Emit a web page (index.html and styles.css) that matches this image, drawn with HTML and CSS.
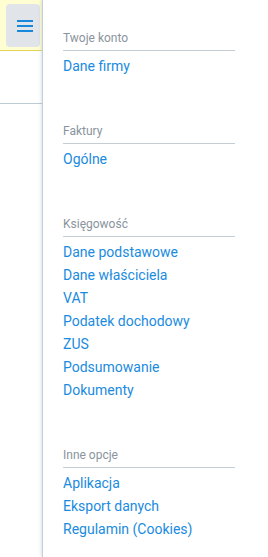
FILE: index.html
```html
<!DOCTYPE html>
<html>
<head>
  <title>Menu</title>
  <link rel="stylesheet" href="styles.css">
</head>
<body>
  <div class="page">
    <div class="side">
      <div class="topbar">
        <button class="menu-btn">
          <svg width="16" height="12" viewBox="0 0 16 12">
            <rect x="0" y="0" width="16" height="2" fill="#1789dc"/>
            <rect x="0" y="5" width="16" height="2" fill="#1789dc"/>
            <rect x="0" y="10" width="16" height="2" fill="#1789dc"/>
          </svg>
        </button>
      </div>
      <div class="side-row"></div>
    </div>

    <nav class="panel">
      <div class="section">
        <div class="section-title">Twoje konto</div>
        <ul class="links">
          <li><a href="#">Dane firmy</a></li>
        </ul>
      </div>

      <div class="section">
        <div class="section-title">Faktury</div>
        <ul class="links">
          <li><a href="#">Ogólne</a></li>
        </ul>
      </div>

      <div class="section">
        <div class="section-title">Księgowość</div>
        <ul class="links">
          <li><a href="#">Dane podstawowe</a></li>
          <li><a href="#">Dane właściciela</a></li>
          <li><a href="#">VAT</a></li>
          <li><a href="#">Podatek dochodowy</a></li>
          <li><a href="#">ZUS</a></li>
          <li><a href="#">Podsumowanie</a></li>
          <li><a href="#">Dokumenty</a></li>
        </ul>
      </div>

      <div class="section">
        <div class="section-title">Inne opcje</div>
        <ul class="links">
          <li><a href="#">Aplikacja</a></li>
          <li><a href="#">Eksport danych</a></li>
          <li><a href="#">Regulamin (Cookies)</a></li>
        </ul>
      </div>
    </nav>
  </div>
</body>
</html>
```

FILE: styles.css
```css
body {
  margin: 0;
  font-family: Roboto, "Liberation Sans", sans-serif;
  background: #fff;
}

.page {
  display: flex;
  height: 557px;
  overflow: hidden;
}

.side {
  width: 42px;
  flex-shrink: 0;
  overflow: hidden;
}

.topbar {
  height: 51px;
  background: #fffed3;
  border-bottom: 1px solid #e6d552;
  padding: 4px 0 0 6px;
  box-sizing: border-box;
}

.menu-btn {
  width: 34px;
  height: 43px;
  border: none;
  border-radius: 4px;
  background: #e1e4e9;
  padding: 0 0 0 4px;
  display: flex;
  align-items: center;
  justify-content: center;
}

.menu-btn svg {
  display: block;
}

.side-row {
  height: 52px;
  border-bottom: 1px solid #bccad4;
}

.panel {
  flex: 1;
  border-left: 1px solid #c3cfd8;
  box-shadow: -1px 0 3px rgba(120, 140, 160, 0.25);
  padding: 30px 33px 0 20px;
}

.section {
  margin-bottom: 45px;
}

.section-title {
  font-size: 12px;
  line-height: 16px;
  color: #8a949d;
  padding-bottom: 4px;
  border-bottom: 1px solid #c5ced5;
}

.links {
  list-style: none;
  margin: 4px 0 0;
  padding: 0;
}

.links li {
  line-height: 23px;
  font-size: 14px;
}

.links a {
  color: #1a8be0;
  text-decoration: none;
}
```
